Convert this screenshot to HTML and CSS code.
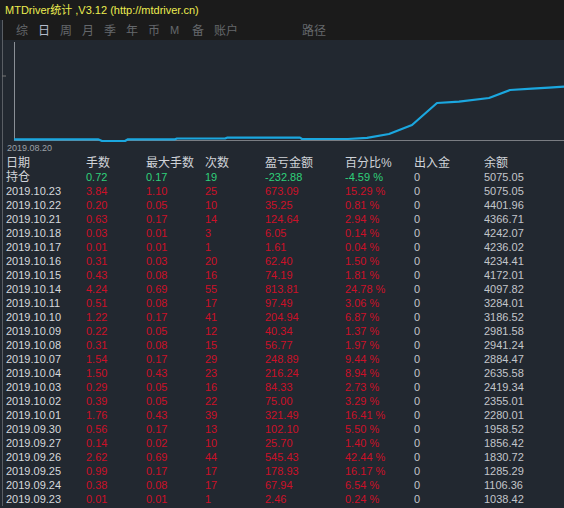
FILE: index.html
```html
<!DOCTYPE html>
<html>
<head>
<meta charset="utf-8">
<link rel="stylesheet" href="styles.css">
</head>
<body>
<div class="app">
  <div class="title">MTDriver统计 ,V3.12 (http://mtdriver.cn)</div>
  <div class="main">
    <div class="tabs">
      <span class="tab">综</span>
      <span class="tab active">日</span>
      <span class="tab">周</span>
      <span class="tab">月</span>
      <span class="tab">季</span>
      <span class="tab">年</span>
      <span class="tab">币</span>
      <span class="tab m">M</span>
      <span class="tab">备</span>
      <span class="tab wide">账户</span>
      <span class="tab wide path">路径</span>
    </div>
    <div class="chart">
      <svg class="plot" width="562" height="102" viewBox="2 0 562 102">
        <line x1="14.5" y1="2" x2="14.5" y2="100" stroke="#8a8f96" stroke-width="1"/>
        <line x1="2" y1="36" x2="6" y2="36" stroke="#777" stroke-width="1"/>
        <line x1="14" y1="100.5" x2="564" y2="100.5" stroke="#7a7d82" stroke-width="1"/>
        <polyline fill="none" stroke="#1ba7df" stroke-width="2.2" stroke-linejoin="round"
          points="14,99.3 98,99.3 102,101 125,101 128,99.3 175,99.3 177,98.5 225,98.5 227,97.7 300,97.7 302,99 348,99 367,97.8 389,94 412,85 437,63 459,61.7 489,58 510,50 532,48.7 549,47.7 564,46.7"/>
      </svg>
      <div class="date-label">2019.08.20</div>
    </div>
    <div class="table">
      <div class="row head"><span>日期</span><span>手数</span><span>最大手数</span><span>次数</span><span>盈亏金额</span><span>百分比%</span><span>出入金</span><span>余额</span></div>
      <div class="row hold"><span class="d">持仓</span><span class="g">0.72</span><span class="g">0.17</span><span class="g">19</span><span class="g">-232.88</span><span class="g">-4.59 %</span><span>0</span><span>5075.05</span></div>
      <div class="row"><span class="d">2019.10.23</span><span class="r">3.84</span><span class="r">1.10</span><span class="r">25</span><span class="r">673.09</span><span class="r">15.29 %</span><span>0</span><span>5075.05</span></div>
      <div class="row"><span class="d">2019.10.22</span><span class="r">0.20</span><span class="r">0.05</span><span class="r">10</span><span class="r">35.25</span><span class="r">0.81 %</span><span>0</span><span>4401.96</span></div>
      <div class="row"><span class="d">2019.10.21</span><span class="r">0.63</span><span class="r">0.17</span><span class="r">14</span><span class="r">124.64</span><span class="r">2.94 %</span><span>0</span><span>4366.71</span></div>
      <div class="row"><span class="d">2019.10.18</span><span class="r">0.03</span><span class="r">0.01</span><span class="r">3</span><span class="r">6.05</span><span class="r">0.14 %</span><span>0</span><span>4242.07</span></div>
      <div class="row"><span class="d">2019.10.17</span><span class="r">0.01</span><span class="r">0.01</span><span class="r">1</span><span class="r">1.61</span><span class="r">0.04 %</span><span>0</span><span>4236.02</span></div>
      <div class="row"><span class="d">2019.10.16</span><span class="r">0.31</span><span class="r">0.03</span><span class="r">20</span><span class="r">62.40</span><span class="r">1.50 %</span><span>0</span><span>4234.41</span></div>
      <div class="row"><span class="d">2019.10.15</span><span class="r">0.43</span><span class="r">0.08</span><span class="r">16</span><span class="r">74.19</span><span class="r">1.81 %</span><span>0</span><span>4172.01</span></div>
      <div class="row"><span class="d">2019.10.14</span><span class="r">4.24</span><span class="r">0.69</span><span class="r">55</span><span class="r">813.81</span><span class="r">24.78 %</span><span>0</span><span>4097.82</span></div>
      <div class="row"><span class="d">2019.10.11</span><span class="r">0.51</span><span class="r">0.08</span><span class="r">17</span><span class="r">97.49</span><span class="r">3.06 %</span><span>0</span><span>3284.01</span></div>
      <div class="row"><span class="d">2019.10.10</span><span class="r">1.22</span><span class="r">0.17</span><span class="r">41</span><span class="r">204.94</span><span class="r">6.87 %</span><span>0</span><span>3186.52</span></div>
      <div class="row"><span class="d">2019.10.09</span><span class="r">0.22</span><span class="r">0.05</span><span class="r">12</span><span class="r">40.34</span><span class="r">1.37 %</span><span>0</span><span>2981.58</span></div>
      <div class="row"><span class="d">2019.10.08</span><span class="r">0.31</span><span class="r">0.08</span><span class="r">15</span><span class="r">56.77</span><span class="r">1.97 %</span><span>0</span><span>2941.24</span></div>
      <div class="row"><span class="d">2019.10.07</span><span class="r">1.54</span><span class="r">0.17</span><span class="r">29</span><span class="r">248.89</span><span class="r">9.44 %</span><span>0</span><span>2884.47</span></div>
      <div class="row"><span class="d">2019.10.04</span><span class="r">1.50</span><span class="r">0.43</span><span class="r">23</span><span class="r">216.24</span><span class="r">8.94 %</span><span>0</span><span>2635.58</span></div>
      <div class="row"><span class="d">2019.10.03</span><span class="r">0.29</span><span class="r">0.05</span><span class="r">16</span><span class="r">84.33</span><span class="r">2.73 %</span><span>0</span><span>2419.34</span></div>
      <div class="row"><span class="d">2019.10.02</span><span class="r">0.39</span><span class="r">0.05</span><span class="r">22</span><span class="r">75.00</span><span class="r">3.29 %</span><span>0</span><span>2355.01</span></div>
      <div class="row"><span class="d">2019.10.01</span><span class="r">1.76</span><span class="r">0.43</span><span class="r">39</span><span class="r">321.49</span><span class="r">16.41 %</span><span>0</span><span>2280.01</span></div>
      <div class="row"><span class="d">2019.09.30</span><span class="r">0.56</span><span class="r">0.17</span><span class="r">13</span><span class="r">102.10</span><span class="r">5.50 %</span><span>0</span><span>1958.52</span></div>
      <div class="row"><span class="d">2019.09.27</span><span class="r">0.14</span><span class="r">0.02</span><span class="r">10</span><span class="r">25.70</span><span class="r">1.40 %</span><span>0</span><span>1856.42</span></div>
      <div class="row"><span class="d">2019.09.26</span><span class="r">2.62</span><span class="r">0.69</span><span class="r">44</span><span class="r">545.43</span><span class="r">42.44 %</span><span>0</span><span>1830.72</span></div>
      <div class="row"><span class="d">2019.09.25</span><span class="r">0.99</span><span class="r">0.17</span><span class="r">17</span><span class="r">178.93</span><span class="r">16.17 %</span><span>0</span><span>1285.29</span></div>
      <div class="row"><span class="d">2019.09.24</span><span class="r">0.38</span><span class="r">0.08</span><span class="r">17</span><span class="r">67.94</span><span class="r">6.54 %</span><span>0</span><span>1106.36</span></div>
      <div class="row"><span class="d">2019.09.23</span><span class="r">0.01</span><span class="r">0.01</span><span class="r">1</span><span class="r">2.46</span><span class="r">0.24 %</span><span>0</span><span>1038.42</span></div>
    </div>
  </div>
</div>
</body>
</html>
```

FILE: styles.css
```css
html, body {
  margin: 0;
  padding: 0;
  background: #222830;
}
body {
  width: 564px;
  height: 508px;
  overflow: hidden;
  font-family: "Liberation Sans", Arial, "Noto Sans CJK SC", sans-serif;
}
.app {
  width: 564px;
  height: 508px;
  overflow: hidden;
  background: #222830;
}
.title {
  height: 20px;
  line-height: 20px;
  padding-left: 5px;
  font-size: 11px;
  color: #ecec50;
  background: #1b1b1b;
  white-space: nowrap;
}
.main {
  margin-left: 2px;
  border-left: 1px solid #5a5e64;
}
.tabs {
  height: 20px;
  background: #1b1b1b;
  display: flex;
  align-items: center;
  padding-left: 13px;
  font-family: "Noto Sans CJK SC", "Liberation Sans", sans-serif;
  font-size: 12px;
  color: #65686c;
}
.tab {
  width: 22px;
  text-align: left;
  line-height: 18px;
  display: block;
}
.tab.m {
  font-family: "Liberation Sans", sans-serif;
  font-size: 11px;
}
.tab.active {
  color: #b4bccb;
}
.tab.wide {
  width: 36px;
}
.tab.path {
  margin-left: 52px;
}
.chart {
  height: 116px;
  display: flex;
  flex-direction: column;
}
.plot {
  display: block;
  margin-left: -1px;
}
.date-label {
  height: 14px;
  line-height: 12px;
  font-size: 9px;
  color: #9ca0a6;
  padding-left: 4px;
}
.table {
  font-size: 11px;
  color: #d4d6da;
}
.row {
  display: grid;
  grid-template-columns: 80px 60px 59px 60px 80px 69px 70px 1fr;
  height: 14px;
  line-height: 14px;
  padding-left: 3px;
  white-space: nowrap;
}
.row span {
  display: block;
  height: 14px;
  overflow: hidden;
  color: #c2c5ca;
}
.row span.d {
  color: #d6d8dc;
}
.row.head span, .row.hold span.d {
  font-family: "Liberation Sans", "Noto Sans CJK SC", sans-serif;
  font-size: 12px;
  line-height: 14px;
  color: #d0d3d8;
}
.row span.r {
  color: #cc1028;
}
.row span.g {
  color: #2fd07a;
}
```
